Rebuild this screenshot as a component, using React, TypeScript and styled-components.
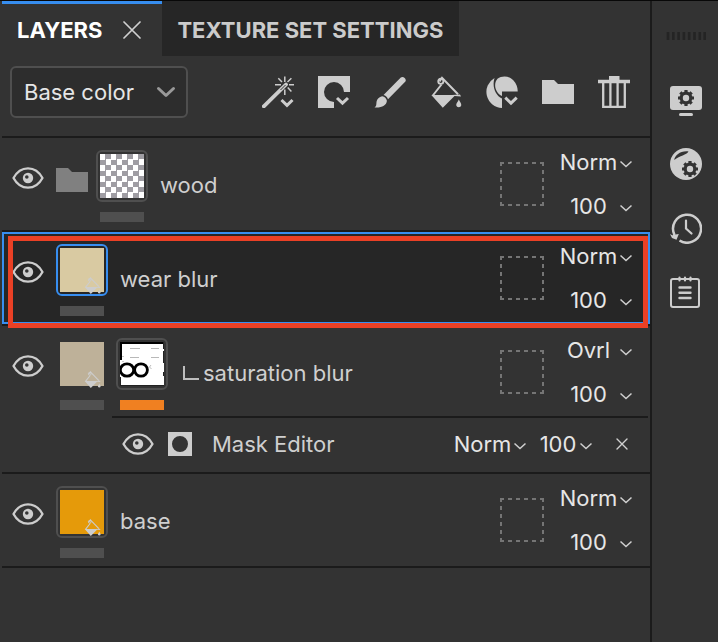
import React from "react";
import styled, { createGlobalStyle } from "styled-components";

const color = {
  panel: "#333333",
  sunken: "#262626",
  field: "#2d2d2d",
  line: "#1b1b1b",
  frame: "#4f4f4f",
  icon: "#cdcdcd",
  text: "#cfcfcf",
  bright: "#e6e6e6",
  accent: "#378ef0",
  marker: "#ea4025",
  mask: "#f08021",
};

const GlobalStyle = createGlobalStyle`
  *, *::before, *::after { box-sizing: border-box; }
  body {
    margin: 0;
    background: ${color.panel};
    color: ${color.text};
    font: 400 22px/28px Inter, "Liberation Sans", sans-serif;
  }
  button, select { font: inherit; color: inherit; }
  svg { display: block; flex: none; }
`;

const Page = styled.div`
  display: flex;
  min-height: 100vh;
  border-top: 1px solid #080808;
`;

const Panel = styled.main`
  flex: 1;
  min-width: 0;
  padding-left: 2px;
  border-right: 2px solid ${color.line};
`;

const TabBar = styled.nav`
  display: flex;
  height: 55px;
`;

const Tab = styled.div<{ $active?: boolean }>`
  display: flex;
  align-items: center;
  gap: 21px;
  padding: 0 ${(p) => (p.$active ? 21 : 16)}px 0 15px;
  background: ${(p) => (p.$active ? color.panel : color.sunken)};
  border-top: 3px solid ${(p) => (p.$active ? color.accent : "transparent")};
  color: ${(p) => (p.$active ? "#ffffff" : "#cbcbcb")};
`;

const TabButton = styled.button`
  padding: 0;
  border: 0;
  background: none;
  font-weight: 700;
  white-space: nowrap;
`;

const IconButton = styled.button<{ $height?: number }>`
  display: flex;
  flex: none;
  align-items: center;
  justify-content: center;
  padding: 0;
  border: 0;
  background: none;
  color: ${color.icon};
  height: ${(p) => (p.$height ? `${p.$height}px` : "auto")};
`;

const Toolbar = styled.div`
  display: flex;
  align-items: center;
  justify-content: space-between;
  height: 82px;
  padding: 0 20px 8px 8px;
  border-bottom: 2px solid ${color.line};
`;

const Tools = styled.div`
  display: flex;
  gap: 24px;
`;

const ChannelField = styled.label`
  display: grid;
  align-items: center;
  width: 178px;
  height: 52px;
  background: ${color.field};
  border: 2px solid ${color.frame};
  border-radius: 6px;
  color: ${color.bright};

  > * { grid-area: 1 / 1; }
  > svg { justify-self: end; margin-right: 10px; pointer-events: none; }
`;

const PlainSelect = styled.select`
  appearance: none;
  width: 100%;
  height: 100%;
  padding: 0 0 0 12px;
  border: 0;
  background: none;
`;

const ValueField = styled.label<{ $width: number }>`
  display: grid;
  align-items: center;
  width: ${(p) => p.$width}px;
  height: 44px;
  color: ${color.bright};

  > * { grid-area: 1 / 1; }
  > svg { justify-self: end; margin-top: 3px; pointer-events: none; }
`;

const ValueSelect = styled.select`
  appearance: none;
  width: 100%;
  height: 100%;
  padding: 0 14px 0 0;
  border: 0;
  background: none;
  text-align: center;
  text-align-last: center;
`;

const LayerList = styled.ul`
  margin: 0;
  padding: 0;
  list-style: none;
`;

const LayerItem = styled.li`
  position: relative;
  border-bottom: 2px solid ${color.line};
`;

const LayerRow = styled.div<{ $selected?: boolean }>`
  display: flex;
  align-items: flex-start;
  min-height: 92px;
  padding: 0 17px 0 10px;
  background: ${(p) => (p.$selected ? color.sunken : "transparent")};
  box-shadow: ${(p) => (p.$selected ? `inset 0 0 0 2px ${color.accent}` : "none")};
`;

const Marker = styled.div`
  position: absolute;
  inset: 4px 2px -4px 6px;
  border: 5px solid ${color.marker};
  pointer-events: none;
`;

const Thumbs = styled.div`
  display: flex;
  gap: 8px;
  margin-left: 12px;
`;

const FolderSlot = styled.span`
  display: flex;
  align-items: center;
  height: 84px;
  color: #808080;
`;

const ThumbColumn = styled.div`
  display: flex;
  flex-direction: column;
  align-items: center;
  gap: 10px;
  padding-top: 12px;
`;

const Frame = styled.button<{ $border: string }>`
  position: relative;
  width: 52px;
  height: 52px;
  padding: 2px;
  border: 2px solid ${(p) => p.$border};
  border-radius: 6px;
  background: none;
`;

const Swatch = styled.span<{ $fill: string }>`
  display: block;
  height: 100%;
  background: ${(p) => p.$fill};
`;

const FillBadge = styled.span`
  position: absolute;
  right: 5px;
  bottom: 0;
  color: ${color.icon};
`;

const Bar = styled.span<{ $active?: boolean }>`
  width: 44px;
  height: 10px;
  background: ${(p) => (p.$active ? color.mask : color.frame)};
`;

const LayerName = styled.span<{ $clipped?: boolean }>`
  display: flex;
  flex: 1;
  align-items: center;
  gap: 4px;
  min-width: 0;
  height: 94px;
  margin-left: ${(p) => (p.$clipped ? 15 : 12)}px;
  margin-bottom: -4px;
  white-space: nowrap;
`;

const Values = styled.div`
  margin: 2px 0 0 14px;
`;

const EffectRow = styled.div`
  display: flex;
  align-items: center;
  height: 56px;
  margin: -2px 2px 0 110px;
  padding: 0 20px 2px 10px;
  border-top: 2px solid ${color.line};
`;

const EffectName = styled.span`
  flex: 1;
  margin-left: 20px;
`;

const EffectIcon = styled.span`
  margin-left: 14px;
  color: ${color.icon};
`;

const EffectValues = styled.div`
  display: flex;
  gap: 10px;
  margin-right: 23px;
`;

const Sidebar = styled.aside`
  display: flex;
  flex: none;
  flex-direction: column;
  align-items: center;
  width: 66px;
  padding: 31px 0 0 2px;
`;

const SideTools = styled.div`
  display: flex;
  flex-direction: column;
  gap: 32px;
  margin-top: 44px;
`;

const Eye = () => (
  <svg width="32" height="24" viewBox="0 0 32 24" fill="none">
    <path d="M1.500 12C5 5.500 10 2.300 16 2.300S27 5.500 30.500 12C27 18.500 22 21.700 16 21.700S5 18.500 1.500 12Z" stroke="currentColor" strokeWidth="2.300" strokeLinejoin="round" />
    <circle cx="16" cy="12" r="5.200" fill="currentColor" />
    <circle cx="14.800" cy="11" r="1.800" fill={color.panel} />
  </svg>
);

const Cross = ({ size = 18, weight = 1.7 }: { size?: number; weight?: number }) => (
  <svg width={size} height={size} viewBox={`0 0 ${size} ${size}`}>
    <path d={`M1 1L${size - 1} ${size - 1}M${size - 1} 1L1 ${size - 1}`} stroke="#d0d0d0" strokeWidth={weight} strokeLinecap="round" />
  </svg>
);

const SmallChevron = () => (
  <svg width="14" height="8" viewBox="0 0 14 8" fill="none">
    <path d="M1.500 1.500L7 6.500L12.500 1.500" stroke="#d0d0d0" strokeWidth="1.500" />
  </svg>
);

const BigChevron = () => (
  <svg width="20" height="12" viewBox="0 0 20 12" fill="none">
    <path d="M2.500 2.500L10 9.500L17.500 2.500" stroke="#999" strokeWidth="3" strokeLinecap="round" strokeLinejoin="round" />
  </svg>
);

const Wand = () => (
  <svg width="32" height="32" viewBox="0 0 32 32" fill="none" stroke="currentColor">
    <path d="M1.800 30.300L24 8.500" strokeWidth="3.800" strokeLinecap="round" />
    <path d="M18.500 14L23.500 9" stroke={color.panel} strokeWidth="1" />
    <path d="M22.800 0.500V6M22.800 13.500V19M13 8.700H19M27 8.700H32M16.300 2.300L20 6M29.400 2.300L25.500 6M29.400 15.500L25.700 11.600" strokeWidth="1.500" />
    <path d="M19.500 24L25 29.300L30.500 24" strokeWidth="3" />
  </svg>
);

const MaskTool = () => (
  <svg width="32" height="32" viewBox="0 0 32 32">
    <path fill="currentColor" d="M0 0H32V16H26A10 10 0 1 0 16 26V32H0Z" />
    <path d="M19 22L24.500 27.200L30 22" fill="none" stroke="currentColor" strokeWidth="3" />
  </svg>
);

const Brush = () => (
  <svg width="32" height="32" viewBox="0 0 32 32" fill="currentColor">
    <path d="M9.500 19L26.800 1.600C29 -0.200 33 2.800 31.400 5.600L14 23.200C13.300 21 11.600 19.500 9.500 19Z" />
    <path d="M8.200 20.200C10.600 20.600 12.500 22.400 12.900 24.700C12.500 29.500 7.500 32 0.500 31.400C3.400 30 1.600 26.800 3.200 23.700C4.300 21.700 6.200 20.600 8.200 20.200Z" />
  </svg>
);

const Bucket = ({ size = 32 }: { size?: number }) => (
  <svg width={size} height={size} viewBox="0 0 32 32" fill="none">
    <path d="M11.500 8.500L2.800 19.500M9.500 5.500L12 1.800L28 18.300" stroke="currentColor" strokeWidth="2" />
    <circle cx="10.800" cy="5.300" r="2.600" stroke="currentColor" strokeWidth="1.800" />
    <path d="M1.300 19H22L30 18.500L31 20.500L24.500 20L12.800 31.800Z" fill="currentColor" />
    <path d="M28.800 23.500C30 26 31.300 27.300 31.300 29.200A2.600 2.600 0 0 1 26.200 29.200C26.200 27.300 27.800 26 28.800 23.500Z" fill="currentColor" />
  </svg>
);

const SmartMaterial = () => (
  <svg width="32" height="32" viewBox="0 0 32 32" fill="currentColor">
    <path d="M8.500 2A16 16 0 0 0 16 31.900V22.500C9.500 19.500 5.800 10.500 8.500 2Z" />
    <path d="M16 20C9.500 17 6.800 8 11.500 2.800C16 -0.800 23 -0.300 27.300 4.200C30.500 7.500 31.800 11.500 31.700 15.500H16Z" />
    <path d="M19.300 21.700L25 27.200L30.700 21.700" fill="none" stroke="currentColor" strokeWidth="3" />
  </svg>
);

const Folder = () => (
  <svg width="32" height="32" viewBox="0 0 32 32">
    <path fill="currentColor" d="M0 4H12L16 8H32V28H0Z" />
  </svg>
);

const Trash = () => (
  <svg width="32" height="32" viewBox="0 0 32 32" fill="none" stroke="currentColor">
    <path d="M0 5.500H32" strokeWidth="3.500" />
    <path d="M11 2H21.500" strokeWidth="4" />
    <path d="M5.200 7V30.800H26.800V7M12.400 7V30M19.600 7V30" strokeWidth="2.300" />
  </svg>
);

const Gear = ({ x, y }: { x: number; y: number }) => (
  <g transform={`translate(${x} ${y})`} fill="none" stroke={color.panel}>
    <circle r="4.800" strokeWidth="3.200" />
    {[0, 45, 90, 135].map((a) => (
      <path key={a} d="M0 -8V-5.500M0 5.500V8" strokeWidth="3.200" transform={`rotate(${a})`} />
    ))}
  </g>
);

const DisplaySettings = () => (
  <svg width="32" height="32" viewBox="0 0 32 32">
    <rect x="0" y="2" width="32" height="24" rx="3" fill="currentColor" />
    <rect x="9" y="29" width="14" height="3" rx="1.500" fill="currentColor" />
    <Gear x={16} y={14} />
  </svg>
);

const ShaderSettings = () => (
  <svg width="32" height="32" viewBox="0 0 32 32">
    <circle cx="16" cy="16" r="16" fill="currentColor" />
    <path d="M4.200 12C5 7 10.500 2.500 18.500 3.400C16.500 7 10 7.500 4.200 12Z" fill={color.panel} />
    <Gear x={20} y={21} />
  </svg>
);

const History = () => (
  <svg width="32" height="32" viewBox="0 0 32 32" fill="none" stroke="currentColor">
    <path d="M4.300 22.500A14 14 0 1 1 9.500 28.500" strokeWidth="2.500" />
    <path d="M16 8.500V16.500L21.500 21.500" strokeWidth="2.200" strokeLinecap="round" />
    <path d="M0 22L2.500 23.500L4 20.500L5.500 22.500L8.800 22L6.500 27.800L2 26Z" fill="currentColor" stroke="none" />
  </svg>
);

const Log = () => (
  <svg width="32" height="34" viewBox="0 0 32 34" fill="none" stroke="currentColor" strokeLinecap="round">
    <rect x="1" y="3" width="28" height="28" rx="2" strokeWidth="2" />
    <path d="M9.500 1.500V4.500M15 1.500V4.500M20.500 1.500V4.500" strokeWidth="2.200" />
    <path d="M9.500 11.500H20.500M9.500 16.800H20.500M9.500 22H20.500" strokeWidth="2.400" />
  </svg>
);

const Grip = () => (
  <svg width="40" height="8" viewBox="0 0 40 8">
    <path d="M2 0V8M7.300 0V8M12.600 0V8M17.900 0V8M23.200 0V8M28.500 0V8M33.800 0V8M38.700 0V8" stroke="#242424" strokeWidth="2.600" />
  </svg>
);

const MaskSmall = () => (
  <svg width="24" height="24" viewBox="0 0 24 24">
    <path fillRule="evenodd" fill="currentColor" d="M0 0H24V24H0ZM20 12A8 8 0 1 0 4 12A8 8 0 1 0 20 12Z" />
  </svg>
);

const Elbow = () => (
  <svg width="16" height="14" viewBox="0 0 16 14">
    <path d="M1 0V13H16" fill="none" stroke="#bdbdbd" strokeWidth="2" />
  </svg>
);

const SlotOutline = styled.svg`
  margin-top: 24px;
`;

const EmptySlot = () => (
  <SlotOutline width="44" height="44" viewBox="0 0 44 44">
    <path d="M0 1H44M0 43H44M1 0V44M43 0V44" stroke="#757575" strokeWidth="2" strokeDasharray="4 4" />
  </SlotOutline>
);

const MaskPreview = () => (
  <svg width="44" height="44" viewBox="0 0 44 44" fill="none">
    <rect width="44" height="44" fill="#fff" />
    <path d="M0 1H44M1 0V18" stroke="#000" strokeWidth="2" />
    <path d="M0.500 35V43M0 43.500H44M43.500 0V7M43.500 9V21M43.500 30V34" stroke="#222" />
    <path d="M10 6.500H20M31 6.500H39M10 15.500H19M31 15.500H39" stroke="#b8b8b8" />
    <path d="M2 14.500H4M2 19.500H4" stroke="#ccc" />
    <ellipse cx="7" cy="28" rx="6.700" ry="6.200" stroke="#000" strokeWidth="2.800" />
    <ellipse cx="21" cy="28" rx="6.400" ry="6.200" stroke="#000" strokeWidth="2.800" />
    <path d="M31 23L29.500 25L31.500 27" stroke="#bbb" />
  </svg>
);

type ThumbData = { fill?: string; frame?: string; bucket?: boolean; preview?: boolean; label: string };

const checker = "repeating-conic-gradient(#9f9da3 0 25%, #ffffff 0 50%) 0 0 / 11px 11px";

const Thumb = ({ fill = "#fff", frame = "transparent", bucket, preview, label }: ThumbData) => (
  <ThumbColumn>
    <Frame type="button" aria-label={label} $border={frame}>
      {preview ? <MaskPreview /> : <Swatch $fill={fill} />}
      {bucket && (
        <FillBadge>
          <Bucket size={17} />
        </FillBadge>
      )}
    </Frame>
    <Bar $active={preview} />
  </ThumbColumn>
);

const Value = ({ value, label, width }: { value: string; label: string; width: number }) => (
  <ValueField $width={width}>
    <ValueSelect aria-label={label} defaultValue={value}>
      <option>{value}</option>
    </ValueSelect>
    <SmallChevron />
  </ValueField>
);

type Layer = {
  name: string;
  blend: string;
  folder?: boolean;
  selected?: boolean;
  clipped?: boolean;
  effect?: string;
  thumbs: ThumbData[];
};

const layers: Layer[] = [
  { name: "wood", blend: "Norm", folder: true, thumbs: [{ fill: checker, frame: color.frame, label: "wood content" }] },
  { name: "wear blur", blend: "Norm", selected: true, thumbs: [{ fill: "#d9caa2", frame: color.accent, bucket: true, label: "wear blur fill" }] },
  {
    name: "saturation blur",
    blend: "Ovrl",
    clipped: true,
    effect: "Mask Editor",
    thumbs: [
      { fill: "#beb199", bucket: true, label: "saturation blur fill" },
      { frame: color.frame, preview: true, label: "saturation blur mask" },
    ],
  },
  { name: "base", blend: "Norm", thumbs: [{ fill: "#e59a0a", frame: color.frame, bucket: true, label: "base fill" }] },
];

const LayerEntry = ({ layer }: { layer: Layer }) => (
  <LayerItem>
    <LayerRow $selected={layer.selected}>
      <IconButton type="button" aria-label={`Toggle ${layer.name}`} $height={80}>
        <Eye />
      </IconButton>
      <Thumbs>
        {layer.folder && (
          <FolderSlot>
            <Folder />
          </FolderSlot>
        )}
        {layer.thumbs.map((t) => (
          <Thumb key={t.label} {...t} />
        ))}
      </Thumbs>
      <LayerName $clipped={layer.clipped}>
        {layer.clipped && <Elbow />}
        {layer.name}
      </LayerName>
      <EmptySlot />
      <Values>
        <Value value={layer.blend} label={`${layer.name} blending mode`} width={75} />
        <Value value="100" label={`${layer.name} opacity`} width={75} />
      </Values>
    </LayerRow>
    {layer.effect && (
      <EffectRow>
        <IconButton type="button" aria-label={`Toggle ${layer.effect}`}>
          <Eye />
        </IconButton>
        <EffectIcon>
          <MaskSmall />
        </EffectIcon>
        <EffectName>{layer.effect}</EffectName>
        <EffectValues>
          <Value value="Norm" label={`${layer.effect} blending mode`} width={75} />
          <Value value="100" label={`${layer.effect} opacity`} width={56} />
        </EffectValues>
        <IconButton type="button" aria-label={`Remove ${layer.effect}`}>
          <Cross size={12} weight={1.4} />
        </IconButton>
      </EffectRow>
    )}
    {layer.selected && <Marker />}
  </LayerItem>
);

const tools = [
  { label: "Add effect", icon: <Wand /> },
  { label: "Add mask", icon: <MaskTool /> },
  { label: "Add paint layer", icon: <Brush /> },
  { label: "Add fill layer", icon: <Bucket /> },
  { label: "Add smart material", icon: <SmartMaterial /> },
  { label: "Add folder", icon: <Folder /> },
  { label: "Delete layer", icon: <Trash /> },
];

const sideTools = [
  { label: "Display settings", icon: <DisplaySettings /> },
  { label: "Shader settings", icon: <ShaderSettings /> },
  { label: "History", icon: <History /> },
  { label: "Log", icon: <Log /> },
];

export default function App() {
  return (
    <>
      <GlobalStyle />
      <Page>
        <Panel>
          <TabBar>
            <Tab $active>
              <TabButton type="button">LAYERS</TabButton>
              <IconButton type="button" aria-label="Close layers">
                <Cross />
              </IconButton>
            </Tab>
            <Tab>
              <TabButton type="button">TEXTURE SET SETTINGS</TabButton>
            </Tab>
          </TabBar>
          <Toolbar>
            <ChannelField>
              <PlainSelect aria-label="Channel" defaultValue="Base color">
                <option>Base color</option>
              </PlainSelect>
              <BigChevron />
            </ChannelField>
            <Tools>
              {tools.map((t) => (
                <IconButton key={t.label} type="button" aria-label={t.label}>
                  {t.icon}
                </IconButton>
              ))}
            </Tools>
          </Toolbar>
          <LayerList>
            {layers.map((l) => (
              <LayerEntry key={l.name} layer={l} />
            ))}
          </LayerList>
        </Panel>
        <Sidebar>
          <Grip />
          <SideTools>
            {sideTools.map((t) => (
              <IconButton key={t.label} type="button" aria-label={t.label}>
                {t.icon}
              </IconButton>
            ))}
          </SideTools>
        </Sidebar>
      </Page>
    </>
  );
}
